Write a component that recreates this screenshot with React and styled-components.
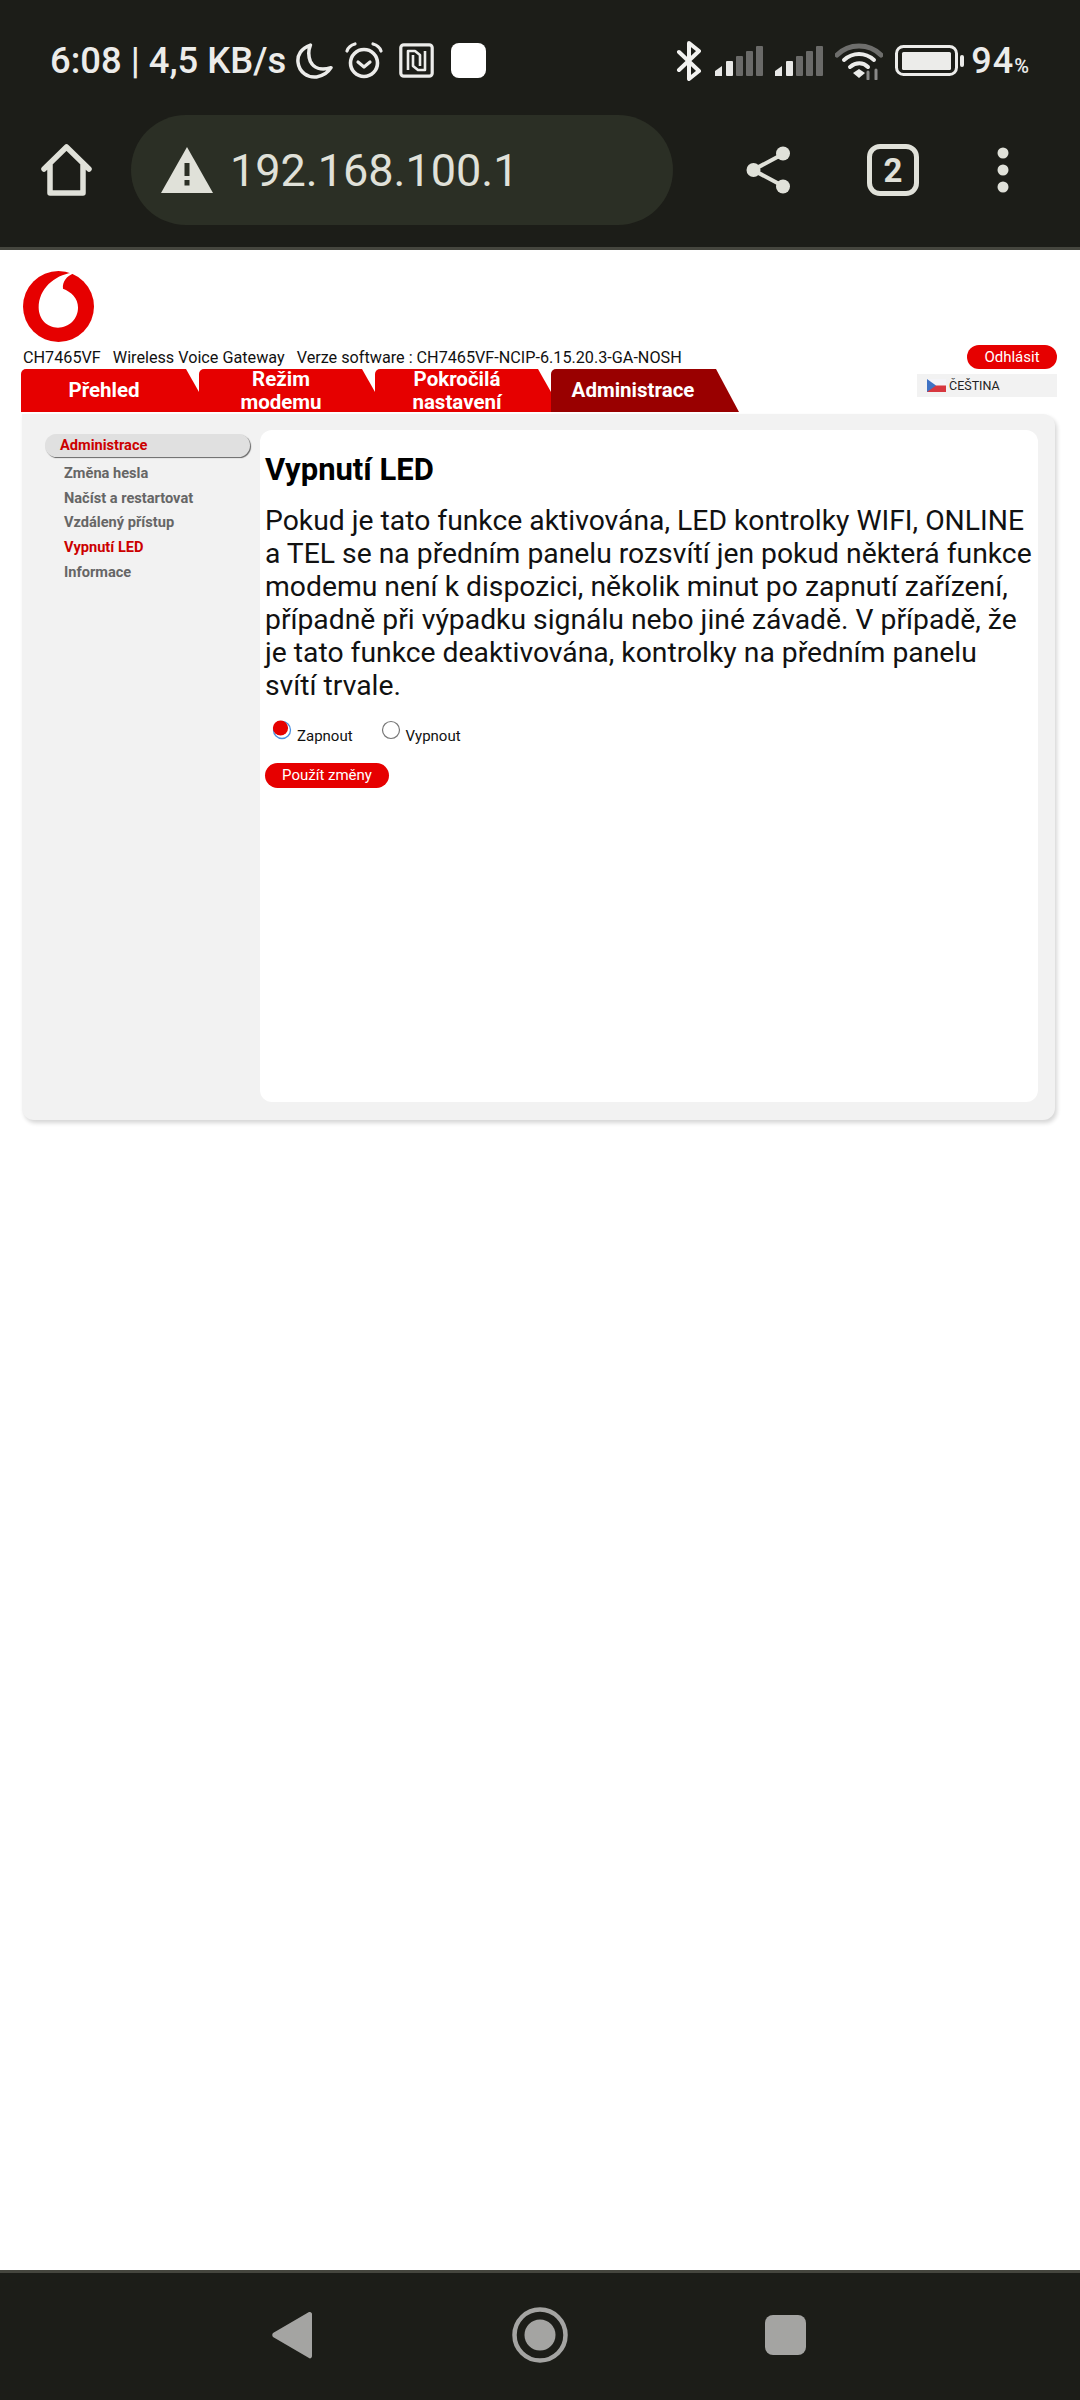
import React from 'react';
import styled, {createGlobalStyle} from "styled-components";

const Global = createGlobalStyle`
  html, body {
    margin: 0;
    padding: 0;
    background: #fff;
    font-family: Roboto, "Liberation Sans", sans-serif;
  }
`

const Screen = styled.div`
  width: 1080px;
  height: 2400px;
  display: flex;
  flex-direction: column;
  overflow: hidden;
`

const Chrome = styled.div`
  height: 247px;
  flex: none;
  background: #1c1d18;
  border-bottom: 3px solid #45463e;
`

const StatusBar = styled.div`
  height: 115px;
  padding: 6px 50px 0 50px;
  box-sizing: border-box;
  display: flex;
  justify-content: space-between;
  align-items: center;
  color: #ececea;
`

const StatusGroup = styled.div`
  display: flex;
  align-items: center;
  column-gap: ${props => props.$gap || 12}px;
`

const Clock = styled.div`
  font-size: 36.4px;
  font-weight: 500;
  width: 234px;
  white-space: nowrap;
`

const Percent = styled.div`
  font-size: 36px;
  font-weight: 500;
  letter-spacing: 1px;
  margin-left: -5px;
  & small {
    font-size: 20px;
  }
`

const Toolbar = styled.div`
  height: 131px;
  display: flex;
  align-items: flex-start;
  padding-left: 41px;
  color: #e0e1d9;
`

const HomeSlot = styled.div`
  width: 90px;
  height: 110px;
  display: flex;
  align-items: center;
`

const UrlPill = styled.div`
  width: 542px;
  height: 110px;
  box-sizing: border-box;
  padding-left: 30px;
  border-radius: 55px;
  background: #2b2f25;
  display: flex;
  align-items: center;
  column-gap: 17px;
  font-size: 45px;
`

const ToolIcons = styled.div`
  height: 110px;
  display: flex;
  align-items: center;
  margin-left: 73px;
`

const TabCount = styled.div`
  width: 52px;
  height: 52px;
  box-sizing: border-box;
  border: 5px solid #e0e1d9;
  border-radius: 13px;
  margin-left: 76px;
  margin-right: 78px;
  display: flex;
  align-items: center;
  justify-content: center;
  font-size: 33px;
  font-weight: 700;
`

const Page = styled.div`
  flex: 1;
  padding: 21px 23px 0 21px;
`

const Logo = styled.svg`
  display: block;
  width: 71px;
  height: 71px;
  margin-left: 2px;
`

const TopRow = styled.div`
  display: flex;
  justify-content: space-between;
  margin-top: 4px;
`

const InfoLine = styled.div`
  height: 23px;
  line-height: 23px;
  padding: 0 0 0 2px;
  font-size: 16.2px;
  color: #111;
  white-space: pre;
`

const Tabs = styled.div`
  display: flex;
  height: 43px;
`

const Tab = styled.div`
  width: ${props => props.$width}px;
  height: 43px;
  box-sizing: border-box;
  padding: ${props => props.$active ? '0 24px 0 0' : '0 12px 0 0'};
  background: ${props => props.$active ? '#990000' : '#e60000'};
  border-radius: 5px 5px 0 0;
  clip-path: ${props => props.$active
    ? 'polygon(0 0, calc(100% - 23px) 0, 100% 100%, 0 100%)'
    : 'polygon(0 0, calc(100% - 13px) 0, 100% 23px, 100% 100%, 0 100%)'};
  display: flex;
  align-items: center;
  justify-content: center;
  text-align: center;
  color: #fff;
  font-size: 20.5px;
  font-weight: 700;
  line-height: 23px;
`

const TopRight = styled.div`
  display: flex;
  flex-direction: column;
  align-items: flex-end;
  row-gap: 5px;
  margin-top: -1px;
`

const Logout = styled.div`
  width: 90px;
  height: 24px;
  border-radius: 12px;
  background: #e60000;
  color: #fff;
  font-size: 15px;
  line-height: 24px;
  text-align: center;
`

const LangBox = styled.div`
  width: 140px;
  height: 23px;
  box-sizing: border-box;
  padding-left: 10px;
  background: #f2f2f2;
  display: flex;
  align-items: center;
  column-gap: 3px;
  font-size: 12.5px;
  color: #222;
`

const Panel = styled.div`
  width: 1033px;
  height: 706px;
  margin: 2px 0 0 1px;
  box-sizing: border-box;
  padding: 16px 17px 18px 23px;
  background: #f2f2f2;
  border-radius: 0 12px 12px 12px;
  box-shadow: 2px 3px 4px #d6d6d6;
  display: flex;
`

const Sidebar = styled.div`
  width: 215px;
  flex: none;
  padding-top: 4px;
`

const SideTitle = styled.div`
  width: 205px;
  height: 23px;
  box-sizing: border-box;
  padding-left: 15px;
  border-radius: 12px;
  background: #e0e0e0;
  box-shadow: 1px 1px 1px #666;
  color: #cc0000;
  font-size: 14.6px;
  font-weight: 700;
  line-height: 22px;
  margin-bottom: 4px;
`

const SideItem = styled.div`
  height: 24.7px;
  line-height: 24.7px;
  padding-left: 19px;
  font-size: 14.6px;
  font-weight: 700;
  color: ${props => props.$active ? '#cc0000' : '#666'};
`

const Content = styled.div`
  flex: 1;
  padding: 0 6px 0 5px;
  background: #fff;
  border-radius: 12px;
`

const Title = styled.h1`
  margin: 22px 0 16px;
  font-size: 31px;
  font-weight: 700;
  line-height: 36px;
  color: #000;
`

const Text = styled.p`
  margin: 0;
  font-size: 28.3px;
  line-height: 33px;
  color: #111;
`

const RadioRow = styled.div`
  display: flex;
  margin-top: 18px;
  height: 32px;
`

const RadioItem = styled.div`
  display: flex;
  align-items: flex-start;
  column-gap: 5px;
  margin-right: 28px;
  font-size: 15px;
  line-height: 20px;
  color: #111;
  padding-left: 7px;
  & span {
    padding-top: 6px;
  }
  & + & {
    padding-left: 0;
    margin-right: 0;
  }
`

const Apply = styled.div`
  width: 124px;
  height: 25px;
  margin-top: 11px;
  border-radius: 13px;
  background: #e60000;
  color: #fff;
  font-size: 15px;
  line-height: 25px;
  text-align: center;
`

const NavBar = styled.div`
  height: 127px;
  flex: none;
  background: #1c1d18;
  border-top: 3px solid #45463e;
  display: flex;
  align-items: center;
  padding: 0 0 0 272px;
`

const NavRow = styled.div`
  display: flex;
  align-items: center;
  margin-top: -3px;
`

const Glyph = styled.svg`
  flex: none;
  margin-left: ${props => props.$left || 0}px;
`

const Moon = () => (
  <Glyph width="38" height="36" viewBox="1 0 35 35" fill="none" stroke="#ececea" strokeWidth="3.4">
    <path d="M15 2C6 5 2 12 3 19c1 9 9 15 18 14 6-1 11-4 14-9-10 3-17 0-20-6-2-5-2-11 0-16z" strokeLinejoin="round"/>
  </Glyph>
)

const Alarm = () => (
  <Glyph width="40" height="37" viewBox="0 0 40 37" fill="none" stroke="#ececea" strokeLinecap="round">
    <circle cx="20" cy="21" r="13.5" strokeWidth="3.6"/>
    <path d="M14 20l6 5 6-5" strokeWidth="3.2" strokeLinejoin="round"/>
    <path d="M3 9c1-3 4-6 8-7M37 9c-1-3-4-6-8-7" strokeWidth="3.2"/>
  </Glyph>
)

const Nfc = () => (
  <Glyph $left={4} width="35" height="35" viewBox="0 0 35 35" fill="none" stroke="#ececea">
    <rect x="1.8" y="1.8" width="31.4" height="31.4" rx="3" strokeWidth="3.2"/>
    <path d="M9 27V8h7l5 4v11M26 8v19h-7l-5-4V12" strokeWidth="2.6" strokeLinejoin="round"/>
  </Glyph>
)

const Bluetooth = () => (
  <svg width="27" height="40" viewBox="0 0 27 40" fill="none" stroke="#f2f2f0" strokeWidth="4" strokeLinejoin="round" strokeLinecap="round">
    <path d="M3 11l20 19-10 8V2l10 8L3 29"/>
  </svg>
)

const Signal = () => (
  <svg width="48" height="32" viewBox="0 0 48 32" fill="#e8e8e6">
    <path d="M0 31v-5l7-5v10z"/>
    <rect x="11" y="16" width="7" height="15" rx="1"/>
    <g fill="#6a6a68">
      <rect x="21" y="11" width="7" height="20" rx="1"/>
      <rect x="31" y="6" width="7" height="25" rx="1"/>
      <rect x="41" y="1" width="7" height="30" rx="1"/>
    </g>
  </svg>
)

const Wifi = () => (
  <svg width="48" height="38" viewBox="0 0 48 38" fill="none" strokeLinecap="round">
    <path d="M2 13C14 1 34 1 46 13" stroke="#6e6e6c" strokeWidth="5"/>
    <path d="M9 18c9-8 21-8 30 0" stroke="#ececea" strokeWidth="4"/>
    <path d="M15 25c6-5 13-5 18 0" stroke="#ececea" strokeWidth="4"/>
    <path d="M18 31l6-4 6 4-6 5z" fill="#ececea"/>
    <path d="M33 30v7M41 28v9" stroke="#8a8a88" strokeWidth="3"/>
  </svg>
)

const Battery = () => (
  <svg width="69" height="32" viewBox="0 0 69 32" fill="none">
    <rect x="1.5" y="1.5" width="60" height="28" rx="7" stroke="#ececea" strokeWidth="3"/>
    <rect x="7" y="7" width="49" height="18" rx="1.5" fill="#ececea"/>
    <rect x="65" y="10" width="4" height="12" rx="2" fill="#ececea"/>
  </svg>
)

const Radio = ({checked}) => checked ? (
  <svg width="20" height="20" viewBox="0 0 20 20" fill="none">
    <circle cx="10" cy="10" r="8.5" stroke="#4a8fe0" strokeWidth="1.3"/>
    <circle cx="8.5" cy="8" r="7.6" fill="#e60000"/>
  </svg>
) : (
  <svg width="20" height="20" viewBox="0 0 20 20" fill="none">
    <circle cx="10" cy="10" r="8.5" fill="#fff" stroke="#777" strokeWidth="1.2"/>
  </svg>
)

const App = () => {
    return (
        <Screen>
            <Global/>
            <Chrome>
                <StatusBar>
                    <StatusGroup $gap={11}>
                        <Clock>6:08 | 4,5 KB/s</Clock>
                        <Moon/>
                        <Alarm/>
                        <Nfc/>
                        <Glyph $left={6} width="35" height="35" viewBox="0 0 35 35">
                            <rect width="35" height="35" rx="8" fill="#fff"/>
                        </Glyph>
                    </StatusGroup>
                    <StatusGroup $gap={12}>
                        <Bluetooth/>
                        <Signal/>
                        <Signal/>
                        <Wifi/>
                        <Battery/>
                        <Percent>94<small>%</small></Percent>
                    </StatusGroup>
                </StatusBar>
                <Toolbar>
                    <HomeSlot>
                        <svg width="51" height="52" viewBox="0 0 51 52" fill="none" stroke="#e0e1d9" strokeWidth="5.5" strokeLinejoin="round" strokeLinecap="round">
                            <path d="M3 25L25.5 3 48 25M9 20v29h33V20"/>
                        </svg>
                    </HomeSlot>
                    <UrlPill>
                        <svg width="52" height="46" viewBox="0 0 52 46">
                            <path d="M26 0l26 46H0z" fill="#e0e1d9"/>
                            <path d="M23.5 16h5v13h-5zM23.5 33h5v5.500h-5z" fill="#2b2f25"/>
                        </svg>
                        192.168.100.1
                    </UrlPill>
                    <ToolIcons>
                        <svg width="45" height="48" viewBox="0 0 45 48" fill="#e0e1d9" stroke="#e0e1d9">
                            <path d="M37 8L7 24l30 16" fill="none" strokeWidth="4"/>
                            <circle cx="37" cy="7.500" r="7" stroke="none"/>
                            <circle cx="7.500" cy="24" r="7" stroke="none"/>
                            <circle cx="37" cy="40.500" r="7" stroke="none"/>
                        </svg>
                        <TabCount>2</TabCount>
                        <svg width="12" height="46" viewBox="0 0 12 46" fill="#e0e1d9">
                            <circle cx="6" cy="6" r="5.500"/>
                            <circle cx="6" cy="23" r="5.500"/>
                            <circle cx="6" cy="40" r="5.500"/>
                        </svg>
                    </ToolIcons>
                </Toolbar>
            </Chrome>
            <Page>
                <Logo viewBox="0 0 68 68">
                    <circle cx="34" cy="34" r="34" fill="#e60000"/>
                    <path d="M47 1.600C30 4 15 17 15 35c0 11 8 19.300 18.500 19.300C44 54.300 52.700 46 52.700 35c0-9-6.700-15-14.400-18C37.500 10 42 5 48 2.400z" fill="#fff"/>
                </Logo>
                <TopRow>
                    <div>
                        <InfoLine>{'CH7465VF   Wireless Voice Gateway   Verze software : CH7465VF-NCIP-6.15.20.3-GA-NOSH'}</InfoLine>
                        <Tabs>
                            <Tab $width={178}>Přehled</Tab>
                            <Tab $width={176}>Režim<br/>modemu</Tab>
                            <Tab $width={176}>Pokročilá<br/>nastavení</Tab>
                            <Tab $width={188} $active>Administrace</Tab>
                        </Tabs>
                    </div>
                    <TopRight>
                        <Logout>Odhlásit</Logout>
                        <LangBox>
                            <svg width="19" height="13" viewBox="0 0 19 13">
                                <rect width="19" height="6.500" fill="#f4f4f8"/>
                                <rect y="6.500" width="19" height="6.500" fill="#d7373f"/>
                                <path d="M0 0l9 6.500L0 13z" fill="#3f72c4"/>
                            </svg>
                            ČEŠTINA
                        </LangBox>
                    </TopRight>
                </TopRow>
                <Panel>
                    <Sidebar>
                        <SideTitle>Administrace</SideTitle>
                        <SideItem>Změna hesla</SideItem>
                        <SideItem>Načíst a restartovat</SideItem>
                        <SideItem>Vzdálený přístup</SideItem>
                        <SideItem $active>Vypnutí LED</SideItem>
                        <SideItem>Informace</SideItem>
                    </Sidebar>
                    <Content>
                        <Title>Vypnutí LED</Title>
                        <Text>Pokud je tato funkce aktivována, LED kontrolky WIFI, ONLINE a TEL se na předním panelu rozsvítí jen pokud některá funkce modemu není k dispozici, několik minut po zapnutí zařízení, případně při výpadku signálu nebo jiné závadě. V případě, že je tato funkce deaktivována, kontrolky na předním panelu svítí trvale.</Text>
                        <RadioRow>
                            <RadioItem><Radio checked/><span>Zapnout</span></RadioItem>
                            <RadioItem><Radio/><span>Vypnout</span></RadioItem>
                        </RadioRow>
                        <Apply>Použít změny</Apply>
                    </Content>
                </Panel>
            </Page>
            <NavBar>
                <NavRow>
                    <svg width="40" height="48" viewBox="0 0 40 48" fill="#a4a4a2">
                        <path d="M38 1c1 0 2 1 2 2v42c0 2-2 3-3 2L1 26c-1-1-1-3 0-4L37 1z"/>
                    </svg>
                    <Glyph $left={200} width="56" height="56" viewBox="0 0 56 56" fill="#a4a4a2">
                        <circle cx="28" cy="28" r="25.500" fill="none" stroke="#a4a4a2" strokeWidth="4.500"/>
                        <circle cx="28" cy="28" r="15.500"/>
                    </Glyph>
                    <Glyph $left={197} width="41" height="40" viewBox="0 0 41 40" fill="#a4a4a2">
                        <rect width="41" height="40" rx="8"/>
                    </Glyph>
                </NavRow>
            </NavBar>
        </Screen>
    );
};

export default App;
